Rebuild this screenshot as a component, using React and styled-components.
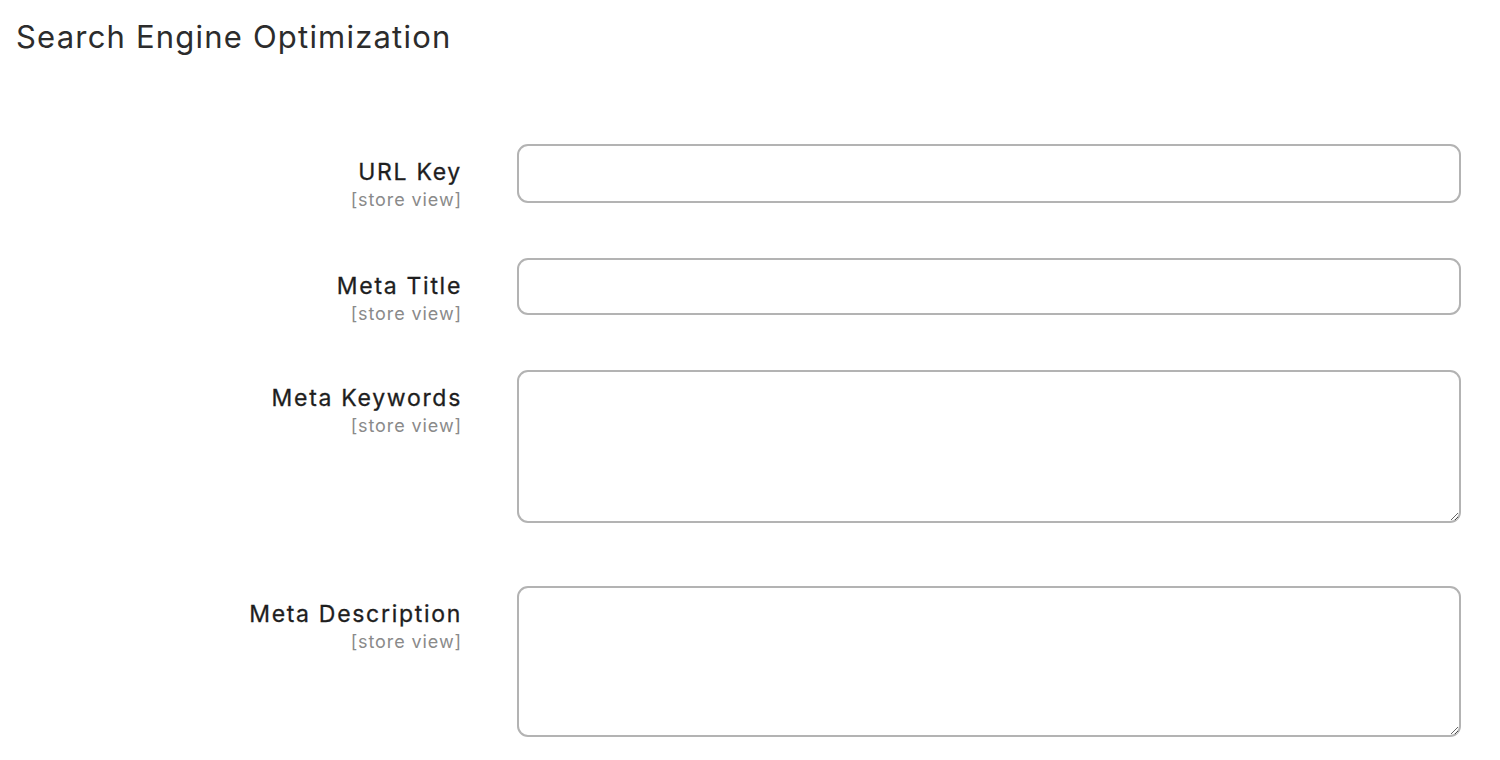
import React from "react";
import styled, { createGlobalStyle } from "styled-components";

const GlobalStyle = createGlobalStyle`
  html, body {
    margin: 0;
    padding: 0;
    background: #fff;
    font-family: "Inter", "Open Sans", sans-serif;
    color: #333;
  }
`;

const Wrapper = styled.section`
  width: 1500px;
  padding: 18px 39px 0 16px;
  box-sizing: border-box;
`;

const Title = styled.h2`
  margin: 0;
  font-size: 31px;
  font-weight: 400;
  line-height: 38px;
  color: #2c2c2c;
  letter-spacing: 1.2px;
`;

const Fields = styled.div`
  display: flex;
  flex-direction: column;
  margin-top: 88px;
`;

const Row = styled.div`
  display: grid;
  grid-template-columns: 445px 1fr;
  align-items: start;
  column-gap: 56px;
  margin-bottom: ${(p) => p.$gap}px;
`;

const LabelCol = styled.div`
  display: flex;
  flex-direction: column;
  align-items: flex-end;
  padding-top: 14px;
`;

const Label = styled.label`
  font-size: 23px;
  font-weight: 400;
  line-height: 28px;
  color: #1e1e1e;
  letter-spacing: 1.7px;
  margin-right: -1px;
  -webkit-text-stroke: 0.3px #1e1e1e;
`;

const Scope = styled.span`
  font-size: 18px;
  line-height: 28px;
  color: #8a8a8a;
  letter-spacing: 0.9px;
  margin-right: -1px;
`;

const Input = styled.input`
  display: block;
  box-sizing: border-box;
  width: 100%;
  height: ${(p) => p.$h}px;
  border: 2px solid #b3b3b3;
  border-radius: 11px;
  font: inherit;
  font-size: 18px;
  padding: 0 16px;
  outline: none;
`;

const TextArea = styled.textarea`
  display: block;
  box-sizing: border-box;
  width: 100%;
  height: ${(p) => p.$h}px;
  border: 2px solid #b3b3b3;
  border-radius: 11px;
  font: inherit;
  font-size: 18px;
  padding: 12px 16px;
  resize: vertical;
  outline: none;
`;

const fields = [
  { label: "URL Key", type: "input", h: 59, gap: 44 },
  { label: "Meta Title", type: "input", h: 57, gap: 42 },
  { label: "Meta Keywords", type: "textarea", h: 153, gap: 63 },
  { label: "Meta Description", type: "textarea", h: 151, gap: 0 },
];

export default function App() {
  return (
    <>
      <GlobalStyle />
      <Wrapper>
        <Title>Search Engine Optimization</Title>
        <Fields>
          {fields.map((f) => (
            <Row key={f.label} $gap={f.gap}>
              <LabelCol>
                <Label>{f.label}</Label>
                <Scope>[store view]</Scope>
              </LabelCol>
              {f.type === "input" ? (
                <Input $h={f.h} />
              ) : (
                <TextArea $h={f.h} />
              )}
            </Row>
          ))}
        </Fields>
      </Wrapper>
    </>
  );
}
